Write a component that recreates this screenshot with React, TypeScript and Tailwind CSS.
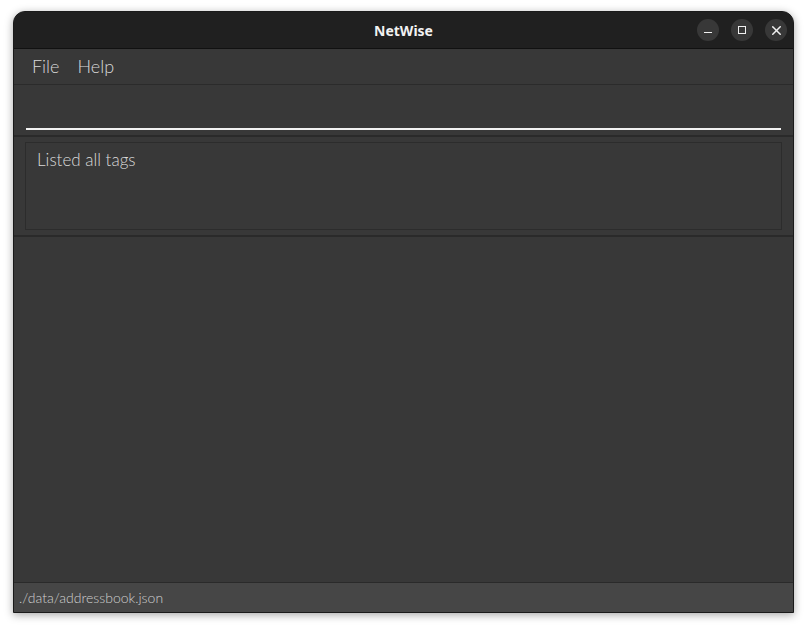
import { X } from 'lucide-react'

const ui = { fontFamily: 'Lato, "Open Sans", sans-serif' }

function TitleButton({ children }: { children: React.ReactNode }) {
  return (
    <div className="flex h-[22px] w-[22px] items-center justify-center rounded-full bg-[#383838] text-[#f0f0f0]">
      {children}
    </div>
  )
}

export default function App() {
  return (
    <div className="h-[629px] w-[808px] overflow-hidden bg-white pl-[13px] pt-[11px]">
      <div className="flex h-[602px] w-[781px] flex-col overflow-hidden rounded-t-[12px] border border-[#1a1a1a] bg-[#383838] shadow-[0_2px_8px_rgba(0,0,0,0.35)]">
        {/* title bar */}
        <div className="relative flex h-[37px] shrink-0 items-center justify-center border-b border-[#111111] bg-[#202020]">
          <span
            className="text-[14px] font-bold text-[#f2f2f2]"
            style={{ fontFamily: '"Noto Sans", "DejaVu Sans", sans-serif' }}
          >
            NetWise
          </span>
          <div className="absolute right-[6px] top-[7px] flex gap-[12px]">
            <TitleButton>
              <div className="mt-[5px] h-[1.5px] w-[8px] bg-[#f0f0f0]" />
            </TitleButton>
            <TitleButton>
              <div className="h-[8px] w-[8px] border-[1.5px] border-[#f0f0f0]" />
            </TitleButton>
            <TitleButton>
              <X size={15} strokeWidth={2.4} />
            </TitleButton>
          </div>
        </div>

        {/* menu bar */}
        <div
          className="flex h-[36px] shrink-0 items-center gap-[18px] border-b border-[#2b2b2b] pl-[18px] text-[18px] font-light text-[#dadada]"
          style={ui}
        >
          <span>File</span>
          <span>Help</span>
        </div>

        {/* command box */}
        <div className="flex h-[52px] shrink-0 items-end border-b-2 border-[#2a2a2a] px-[12px] pb-[5px]">
          <div className="h-[2px] w-full bg-[#f2f2f2]" />
        </div>

        {/* result display */}
        <div className="shrink-0 border-b-2 border-[#2a2a2a] px-[11px] pb-[5px] pt-[5px]">
          <div
            className="h-[88px] border border-[#2c2c2c] px-[11px] pt-[4px] text-[17px] font-light text-[#dadada]"
            style={ui}
          >
            Listed all tags
          </div>
        </div>

        {/* list panel */}
        <div className="flex-1 bg-[#383838]" />

        {/* status bar */}
        <div
          className="flex h-[30px] shrink-0 items-center border-t border-[#2a2a2a] bg-[#464646] pl-[5px] text-[14px] font-light text-[#d0d0d0]"
          style={ui}
        >
          ./data/addressbook.json
        </div>
      </div>
    </div>
  )
}
